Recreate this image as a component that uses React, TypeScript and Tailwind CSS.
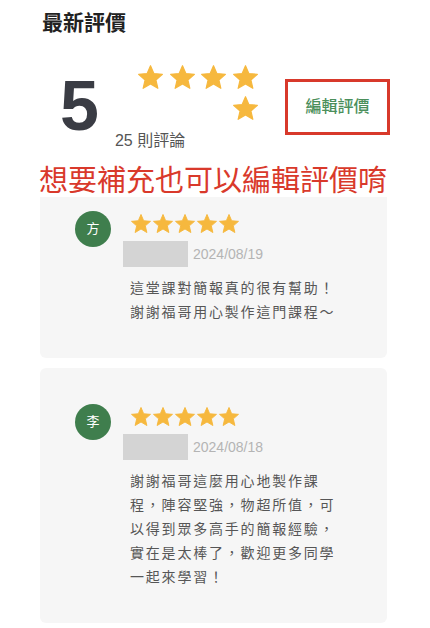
const font = { fontFamily: '"Liberation Sans", "Noto Sans CJK TC", sans-serif' }

interface Review {
  initial: string
  date: string
  text: string
}

const reviews: Review[] = [
  {
    initial: '方',
    date: '2024/08/19',
    text: '這堂課對簡報真的很有幫助！謝謝福哥用心製作這門課程～',
  },
  {
    initial: '李',
    date: '2024/08/18',
    text: '謝謝福哥這麼用心地製作課程，陣容堅強，物超所值，可以得到眾多高手的簡報經驗，實在是太棒了，歡迎更多同學一起來學習！',
  },
]

function Star({ className }: { className: string }) {
  return (
    <svg viewBox="1.5 1.5 21 20" className={className}>
      <path
        d="M12 17.27L18.18 21l-1.64-7.03L22 9.24l-7.19-.61L12 2 9.19 8.63 2 9.24l5.46 4.73L5.82 21z"
        fill="#f6b83e"
        stroke="#f6b83e"
        strokeWidth="1"
        strokeLinejoin="round"
      />
    </svg>
  )
}

function ReviewCard({ review }: { review: Review }) {
  return (
    <div className="w-[347px] rounded-md bg-[#f6f6f6] pt-[36px] pb-[34px] pl-[35px]">
      <div className="flex items-start gap-[12px]">
        {/* Avatar */}
        <div className="flex h-[36px] w-[36px] shrink-0 items-center justify-center rounded-full bg-[#3f7e4d] text-[13px] text-white">
          {review.initial}
        </div>

        <div className="flex flex-col pt-[3px]">
          <div className="flex gap-[2px] pl-[8px]">
            {[0, 1, 2, 3, 4].map(i => (
              <Star key={i} className="h-[19px] w-[20px]" />
            ))}
          </div>
          <div className="mt-[8px] flex items-center gap-[5px]">
            <div className="h-[26px] w-[65px] bg-[#d4d4d4]" />
            <span className="text-[14px] text-[#b4b4b4]">{review.date}</span>
          </div>
          <p className="mt-[9px] w-[219px] pl-[7px] text-[14px] leading-[24px] tracking-[1.8px] text-[#565656]">
            {review.text}
          </p>
        </div>
      </div>
    </div>
  )
}

export default function App() {
  return (
    <div className="relative min-h-[628px] w-[430px] bg-white pl-[40px]" style={font}>
      {/* Title */}
      <h2 className="ml-[2px] pt-[9px] text-[21px] font-bold leading-[28px] text-[#222]">最新評價</h2>

      {/* Rating summary */}
      <div className="mt-[28px] flex items-start">
        <div className="ml-[20px] mt-[6px] text-[70px] font-bold leading-[70px] text-[#3a3c44]">5</div>
        <div className="ml-[16px] flex w-[143px] flex-col">
          <div className="flex flex-wrap justify-end gap-x-[6.5px] gap-y-[7px]">
            {[0, 1, 2, 3, 4].map(i => (
              <Star key={i} className="h-[24px] w-[25px]" />
            ))}
          </div>
          <span className="mt-[10px] text-[16px] leading-[22px] text-[#555]">25 則評論</span>
        </div>
        <div className="ml-[27px] mt-[14px] flex h-[56px] w-[105px] items-center justify-center border-[3px] border-[#d8392b]">
          <span className="text-[16px] font-medium text-[#4b8f5b]">編輯評價</span>
        </div>
      </div>

      {/* Reviews */}
      <div className="mt-[23px] flex flex-col gap-[10px]">
        {reviews.map(r => (
          <ReviewCard key={r.date} review={r} />
        ))}
      </div>

      {/* Annotation */}
      <div className="absolute left-[36px] top-[166px] h-[31px] w-[356px] bg-white pl-[3px] text-[29px] leading-[31px] text-[#d9392b]">
        想要補充也可以編輯評價唷
      </div>
    </div>
  )
}
